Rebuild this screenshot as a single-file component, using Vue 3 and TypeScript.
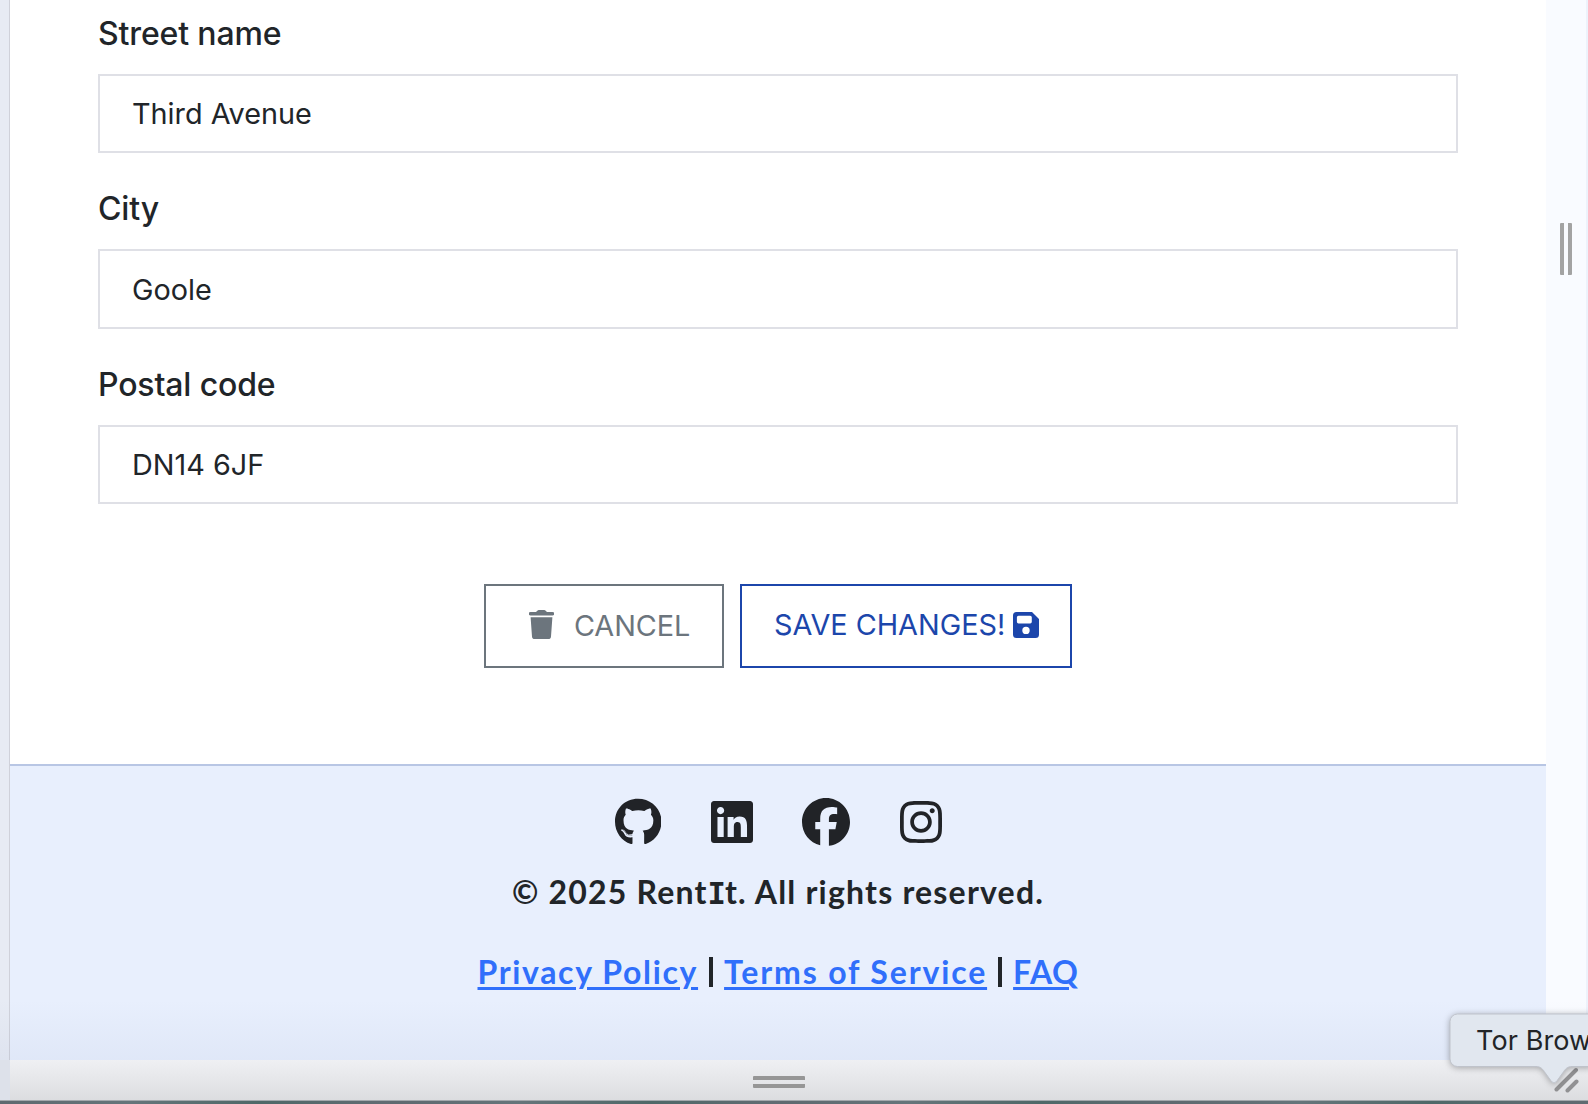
<script setup lang="ts">
interface Field {
  label: string
  value: string
}

const fields: Field[] = [
  { label: 'Street name', value: 'Third Avenue' },
  { label: 'City', value: 'Goole' },
  { label: 'Postal code', value: 'DN14 6JF' },
]
</script>

<template>
  <div class="screen">
    <div class="viewport">
      <div class="gutter-left"></div>
      <div class="page">
        <main class="form">
          <label v-for="f in fields" :key="f.label" class="field">
            <span class="label">{{ f.label }}</span>
            <input class="input" type="text" :value="f.value" />
          </label>
          <div class="actions">
            <button class="btn cancel" type="button">
              <svg class="trash" viewBox="0 0 25 29">
                <path d="M1.5 1.9H7L8.6.4Q9 0 9.6 0h5.8q.6 0 1 .4L18 1.9h5.5a1.5 1.5 0 0 1 0 3.600h-22a1.5 1.5 0 0 1 0-3.600zM1.600 7.200h21.800L22 26.400Q21.800 29 19.200 29H5.800Q3.200 29 3 26.400z" />
              </svg>
              <span>CANCEL</span>
            </button>
            <button class="btn save" type="button">
              <span>SAVE CHANGES!</span>
              <svg class="disk" viewBox="0 0 26 26">
                <path fill-rule="evenodd" d="M3.500 0H19l7 7v15.500a3.500 3.500 0 0 1-3.500 3.500h-19A3.500 3.500 0 0 1 0 22.500v-19A3.500 3.500 0 0 1 3.500 0zM5.500 3.700Q3.900 3.700 3.900 5.300v4.500q0 1.600 1.600 1.600h11.700q1.600 0 1.600-1.600V5.300q0-1.600-1.600-1.600zM13 14.700a3.700 3.700 0 1 0 0 7.400 3.700 3.700 0 0 0 0-7.400z" />
              </svg>
            </button>
          </div>
        </main>
        <footer class="footer">
          <div class="social">
            <svg viewBox="0 0 496 512" width="46.500"><path d="M165.9 397.4c0 2-2.3 3.6-5.2 3.6-3.3.3-5.6-1.3-5.6-3.6 0-2 2.3-3.6 5.2-3.6 3-.3 5.6 1.3 5.6 3.6zm-31.1-4.5c-.7 2 1.3 4.3 4.3 4.9 2.6 1 5.6 0 6.2-2s-1.3-4.3-4.3-5.2c-2.6-.7-5.5.3-6.200 2.300zm44.200-1.700c-2.900.7-4.900 2.600-4.600 4.900.3 2 2.900 3.300 5.900 2.600 2.900-.7 4.900-2.600 4.600-4.600-.3-1.900-3-3.200-5.900-2.900zM244.800 8C106.100 8 0 113.300 0 252c0 110.900 69.800 205.800 169.500 239.200 12.800 2.300 17.300-5.600 17.300-12.100 0-6.200-.3-40.400-.3-61.400 0 0-70 15-84.700-29.800 0 0-11.400-29.100-27.800-36.600 0 0-22.900-15.700 1.600-15.400 0 0 24.900 2 38.600 25.800 21.900 38.600 58.600 27.500 72.900 20.900 2.300-16 8.800-27.100 16-33.700-55.900-6.200-112.300-14.300-112.300-110.500 0-27.500 7.600-41.300 23.600-58.900-2.600-6.500-11.100-33.300 2.600-67.900 20.900-6.500 69 27 69 27 20-5.600 41.500-8.500 62.800-8.500s42.800 2.900 62.800 8.500c0 0 48.100-33.600 69-27 13.700 34.700 5.200 61.400 2.600 67.900 16 17.700 25.800 31.500 25.800 58.900 0 96.500-58.900 104.200-114.800 110.500 9.200 7.900 17 22.900 17 46.400 0 33.700-.3 75.400-.3 83.600 0 6.500 4.600 14.400 17.300 12.100C428.200 457.800 496 362.900 496 252 496 113.300 383.500 8 244.800 8zM97.200 352.900c-1.300 1-1 3.300.7 5.200 1.600 1.600 3.900 2.300 5.200 1 1.300-1 1-3.300-.7-5.200-1.600-1.600-3.900-2.300-5.200-1zm-10.800-8.100c-.7 1.300.3 2.900 2.300 3.900 1.600 1 3.600.7 4.300-.7.7-1.300-.3-2.900-2.300-3.900-2-.6-3.600-.3-4.300.7zm32.400 35.600c-1.600 1.300-1 4.300 1.300 6.200 2.300 2.300 5.200 2.600 6.500 1 1.300-1.300.7-4.300-1.300-6.200-2.200-2.300-5.200-2.600-6.500-1zm-11.400-14.700c-1.600 1-1.600 3.600 0 5.900 1.600 2.300 4.300 3.300 5.600 2.300 1.600-1.300 1.600-3.900 0-6.200-1.400-2.300-4-3.300-5.600-2z" /></svg>
            <svg viewBox="0 0 448 512" width="42"><path d="M416 32H31.900C14.300 32 0 46.500 0 64.300v383.400C0 465.500 14.300 480 31.900 480H416c17.600 0 32-14.500 32-32.300V64.300c0-17.800-14.400-32.300-32-32.300zM135.400 416H69V202.200h66.500V416zm-33.200-243c-21.300 0-38.500-17.300-38.500-38.500S80.900 96 102.200 96c21.200 0 38.500 17.300 38.500 38.500 0 21.300-17.200 38.500-38.500 38.500zm282.100 243h-66.400V312c0-24.800-.5-56.700-34.500-56.700-34.600 0-39.900 27-39.900 54.900V416h-66.400V202.200h63.700v29.200h.9c8.900-16.800 30.600-34.500 62.900-34.500 67.200 0 79.700 44.300 79.700 101.900V416z" /></svg>
            <svg viewBox="0 0 512 512" width="48"><path d="M512 256C512 114.600 397.400 0 256 0S0 114.600 0 256C0 376 82.700 476.800 194.200 504.500V334.200H141.400V256h52.800V222.300c0-87.100 39.400-127.500 125-127.500c16.200 0 44.200 3.200 55.700 6.400V172c-6-.6-16.500-1-29.600-1c-42 0-58.200 15.900-58.200 57.200V256h83.600l-14.400 78.200H287V510.100C413.800 494.800 512 386.900 512 256z" /></svg>
            <svg viewBox="0 0 448 512" width="42"><path d="M224.100 141c-63.600 0-114.900 51.300-114.900 114.900s51.300 114.900 114.900 114.900S339 319.500 339 255.900 287.700 141 224.100 141zm0 189.600c-41.100 0-74.700-33.500-74.700-74.700s33.500-74.700 74.700-74.700 74.700 33.500 74.700 74.700-33.600 74.700-74.700 74.700zm146.400-194.300c0 14.900-12 26.800-26.800 26.800-14.900 0-26.800-12-26.800-26.800s12-26.800 26.800-26.800 26.800 12 26.800 26.800zm76.100 27.200c-1.700-35.900-9.900-67.700-36.200-93.900-26.200-26.200-58-34.400-93.900-36.200-37-2.100-147.900-2.100-184.900 0-35.800 1.700-67.600 9.900-93.900 36.100s-34.400 58-36.200 93.900c-2.100 37-2.100 147.900 0 184.900 1.700 35.900 9.900 67.700 36.200 93.900s58 34.400 93.900 36.200c37 2.100 147.900 2.100 184.900 0 35.900-1.700 67.700-9.900 93.900-36.200 26.200-26.200 34.400-58 36.200-93.900 2.100-37 2.100-147.800 0-184.800zM398.800 388c-7.800 19.600-22.900 34.700-42.600 42.600-29.500 11.700-99.500 9-132.100 9s-102.700 2.600-132.100-9c-19.600-7.800-34.700-22.900-42.600-42.600-11.700-29.500-9-99.500-9-132.100s-2.600-102.700 9-132.100c7.800-19.600 22.900-34.700 42.600-42.600 29.500-11.700 99.500-9 132.100-9s102.700-2.600 132.100 9c19.600 7.800 34.700 22.900 42.600 42.600 11.700 29.500 9 99.500 9 132.100s2.700 102.700-9 132.100z" /></svg>
          </div>
          <p class="copyright">© 2025 Rent<span class="slab">I</span>t. All rights reserved.</p>
          <p class="links">
            <a class="privacy">Privacy Policy</a><span class="bar"></span><a class="terms">Terms of Service</a><span class="bar"></span><a class="faq">FAQ</a>
          </p>
        </footer>
      </div>
      <div class="gutter-right"><i class="grip-v"></i></div>
      <div class="edge"></div>
      <div class="shade"></div>
    </div>
    <div class="resize-bar">
      <i class="grip-h"></i>
    </div>
    <div class="desktop"></div>
    <svg class="corner" viewBox="0 0 26 26"><path d="M2.500 22.500 22 3M13.500 23.500l9-9" /></svg>
    <div class="tooltip">
      <svg class="tip-shape" viewBox="0 0 150 86">
        <path d="M160 6H15.500A7.500 7.500 0 0 0 8 13.500v37.500A7.500 7.500 0 0 0 15.500 58.500H94c5 0 7 3 9 6l6.500 9q2.500 3 5 0l6.500-9c2-3 4-6 9-6H160z" />
      </svg>
      <span class="tip-text">Tor Brow</span>
    </div>
  </div>
</template>

<style>
body { margin: 0; overflow: hidden; }
</style>

<style scoped>
.screen {
  position: relative;
  width: 1588px;
  height: 1104px;
  overflow: hidden;
  display: flex;
  flex-direction: column;
  font-family: Inter, "Liberation Sans", sans-serif;
  color: #212529;
}
.viewport { position: relative; display: flex; height: 1060px; }
.gutter-left { box-sizing: border-box; width: 10px; background: #e7ebf4; border-right: 1px solid #cfd1da; }
.page { width: 1536px; display: flex; flex-direction: column; background: #fff; }
.gutter-right {
  width: 40px;
  background: #f9fbff;
  display: flex;
  justify-content: center;
  align-items: flex-start;
}
.edge { width: 2px; background: #edf2fb; }
.grip-v {
  box-sizing: border-box;
  width: 12px;
  height: 52px;
  margin-top: 223px;
  border: solid #a3a3a3;
  border-width: 0 4px;
  border-radius: 1px;
}
.shade {
  position: absolute;
  inset: auto 0 0 0;
  height: 60px;
  background: linear-gradient(rgba(90, 110, 160, 0), rgba(90, 110, 160, .06));
}
.form { box-sizing: border-box; height: 764px; padding: 12px 88px 0; }
.field { display: block; height: 175.400px; }
.label { display: block; height: 62px; line-height: 44px; font-size: 32px; font-weight: 500; letter-spacing: -.15px; }
.input {
  box-sizing: border-box;
  display: block;
  width: 1360px;
  height: 79.300px;
  padding: 0 32px;
  border: 2px solid #dfe0e6;
  border-radius: 0;
  background: #fff;
  color: #212529;
  font: 400 28.800px Inter, sans-serif;
  outline: none;
}
.actions { display: flex; justify-content: center; gap: 16px; margin-top: 45.800px; }
.btn {
  box-sizing: border-box;
  height: 84px;
  display: flex;
  align-items: center;
  padding: 0;
  background: #fff;
  border: 2px solid currentColor;
  font: 400 28.800px Inter, sans-serif;
  white-space: nowrap;
}
.btn svg { flex: none; fill: currentColor; }
.cancel { width: 240px; padding-left: 43px; color: #6c757d; }
.cancel span { margin-left: 20px; letter-spacing: -.1px; }
.trash { width: 25px; height: 29px; margin-bottom: 2px; }
.save { width: 332px; padding: 0 0 2px 32px; color: #1c46ab; }
.save span { width: 239px; text-align: left; }
.disk { width: 26px; height: 26px; }
.footer {
  box-sizing: border-box;
  height: 296px;
  padding-top: 32px;
  border-top: 2px solid #b8c6e4;
  background: #e8effd;
  display: flex;
  flex-direction: column;
  align-items: center;
  font-family: Lato, sans-serif;
  font-weight: 700;
  font-size: 32px;
}
.social { display: flex; gap: 49.500px; height: 48px; color: #212327; }
.social svg { height: 48px; fill: currentColor; }
.copyright { margin: 25px 0 0; height: 42px; line-height: 42px; letter-spacing: 1.200px; white-space: nowrap; }
.slab { font-family: "DejaVu Sans Mono", monospace; font-size: 30.500px; letter-spacing: -1px; }
.links { display: flex; align-items: center; gap: 11px; margin: 38px 0 0; height: 42px; line-height: 42px; white-space: nowrap; }
.links a {
  color: #306ffb;
  text-decoration: underline;
  text-decoration-thickness: 3px;
  text-underline-offset: 3px;
}
.privacy { letter-spacing: 1.650px; }
.terms { letter-spacing: 1.850px; }
.faq { letter-spacing: .600px; }
.bar { width: 4px; height: 30px; background: #212529; }
.resize-bar {
  height: 40px;
  display: flex;
  justify-content: center;
  align-items: center;
  padding: 0 40px 0 0;
  margin-left: 10px;
  background: linear-gradient(#eff0f3, #dcdde0);
  box-shadow: -10px 0 0 #dde1ea;
}
.grip-h {
  box-sizing: border-box;
  width: 52px;
  height: 12px;
  margin-top: 4px;
  border: solid #969696;
  border-width: 4px 0;
  border-radius: 1px;
}
.desktop {
  height: 4px;
  background: linear-gradient(#a4a9ad 0 1px, transparent 1px), repeating-linear-gradient(90deg, #5e696f 0, #65757a 130px, #4f6868 260px, #626c73 390px);
}
.corner { position: absolute; left: 1554px; top: 1067px; width: 26px; height: 26px; fill: none; stroke: #919193; stroke-width: 4; stroke-linecap: round; }
.tooltip { position: absolute; left: 1442px; top: 1007.500px; width: 150px; height: 86px; }
.tip-shape {
  position: absolute;
  inset: 0;
  width: 150px;
  height: 86px;
  fill: #e1e7ef;
  stroke: #bfc3cb;
  stroke-width: 1;
  filter: drop-shadow(0 1px 3px rgba(0, 0, 0, .3));
}
.tip-text { position: absolute; left: 34px; top: 15px; font-size: 27px; line-height: 36px; letter-spacing: .1px; color: #222427; white-space: nowrap; }
</style>
